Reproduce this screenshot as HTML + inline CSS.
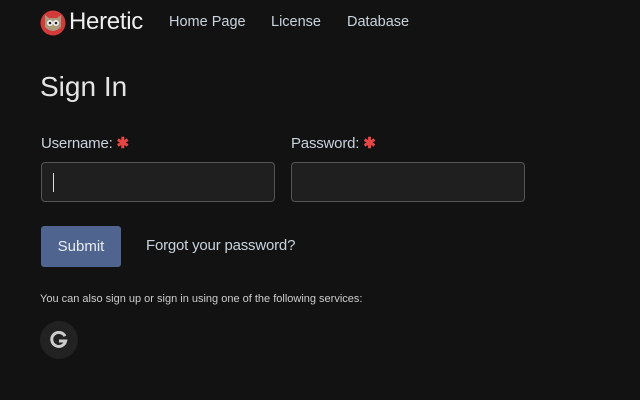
<!DOCTYPE html>
<html><head><style>
body{margin:0;background:#121212;width:640px;height:400px;overflow:hidden;font-family:"Liberation Sans",sans-serif;color:#ddd}
.abs{position:absolute}
.nav{font-size:14.5px;color:#c9d3dd;top:14px}
label{font-size:15px;color:#c9d3dd;letter-spacing:-0.2px}
.star{color:#e84545;font-weight:bold}
.inp{background:#1f1f1f;border:1px solid #555;border-radius:4px;height:38px;width:232px;top:162px}
</style></head><body>
<svg class="abs" style="left:40px;top:10px" width="26" height="26" viewBox="0 0 26 26">
<circle cx="13" cy="13" r="12.5" fill="#d33b3b"/>
<path d="M5 5 L9 8 L17 8 L21 5 L21 17 Q13 25 5 17 Z" fill="#a89a7e"/>
<circle cx="10" cy="13" r="3" fill="#eee"/><circle cx="16" cy="13" r="3" fill="#eee"/>
<circle cx="10" cy="13" r="1.3" fill="#222"/><circle cx="16" cy="13" r="1.3" fill="#222"/>
<path d="M12 16 L14 16 L13 19 Z" fill="#c8a040"/>
</svg>
<div class="abs" style="left:69px;top:8px;font-size:24px;color:#eee;letter-spacing:-0.3px">Heretic</div>
<div class="abs nav" style="left:169px">Home Page</div>
<div class="abs nav" style="left:271px">License</div>
<div class="abs nav" style="left:347px">Database</div>
<div class="abs" style="left:40px;top:71px;font-size:28px;color:#e4e4e4">Sign In</div>
<label class="abs" style="left:41px;top:134px">Username: <span class="star">✱</span></label>
<label class="abs" style="left:291px;top:134px">Password: <span class="star">✱</span></label>
<div class="abs inp" style="left:41px"><div class="abs" style="left:11px;top:10px;width:1px;height:19px;background:#ddd"></div></div>
<div class="abs inp" style="left:291px"></div>
<div class="abs" style="left:41px;top:226px;width:80px;height:41px;background:#4f6590;border-radius:3px;color:#e8ecf3;font-size:15px;line-height:41px;text-align:center">Submit</div>
<div class="abs" style="left:146px;top:237px;font-size:15px;color:#c9d3dd;letter-spacing:-0.2px">Forgot your password?</div>
<div class="abs" style="left:40px;top:293px;font-size:11px;color:#ccc">You can also sign up or sign in using one of the following services:</div>
<div class="abs" style="left:40px;top:321px;width:38px;height:38px;border-radius:50%;background:#222"></div>
<svg class="abs" style="left:50px;top:331px" width="18" height="18" viewBox="0 0 18 18"><path d="M15 5.2 A7 7 0 1 0 15.6 10 L9 10" fill="none" stroke="#ccc" stroke-width="3"/></svg>
</body></html>
